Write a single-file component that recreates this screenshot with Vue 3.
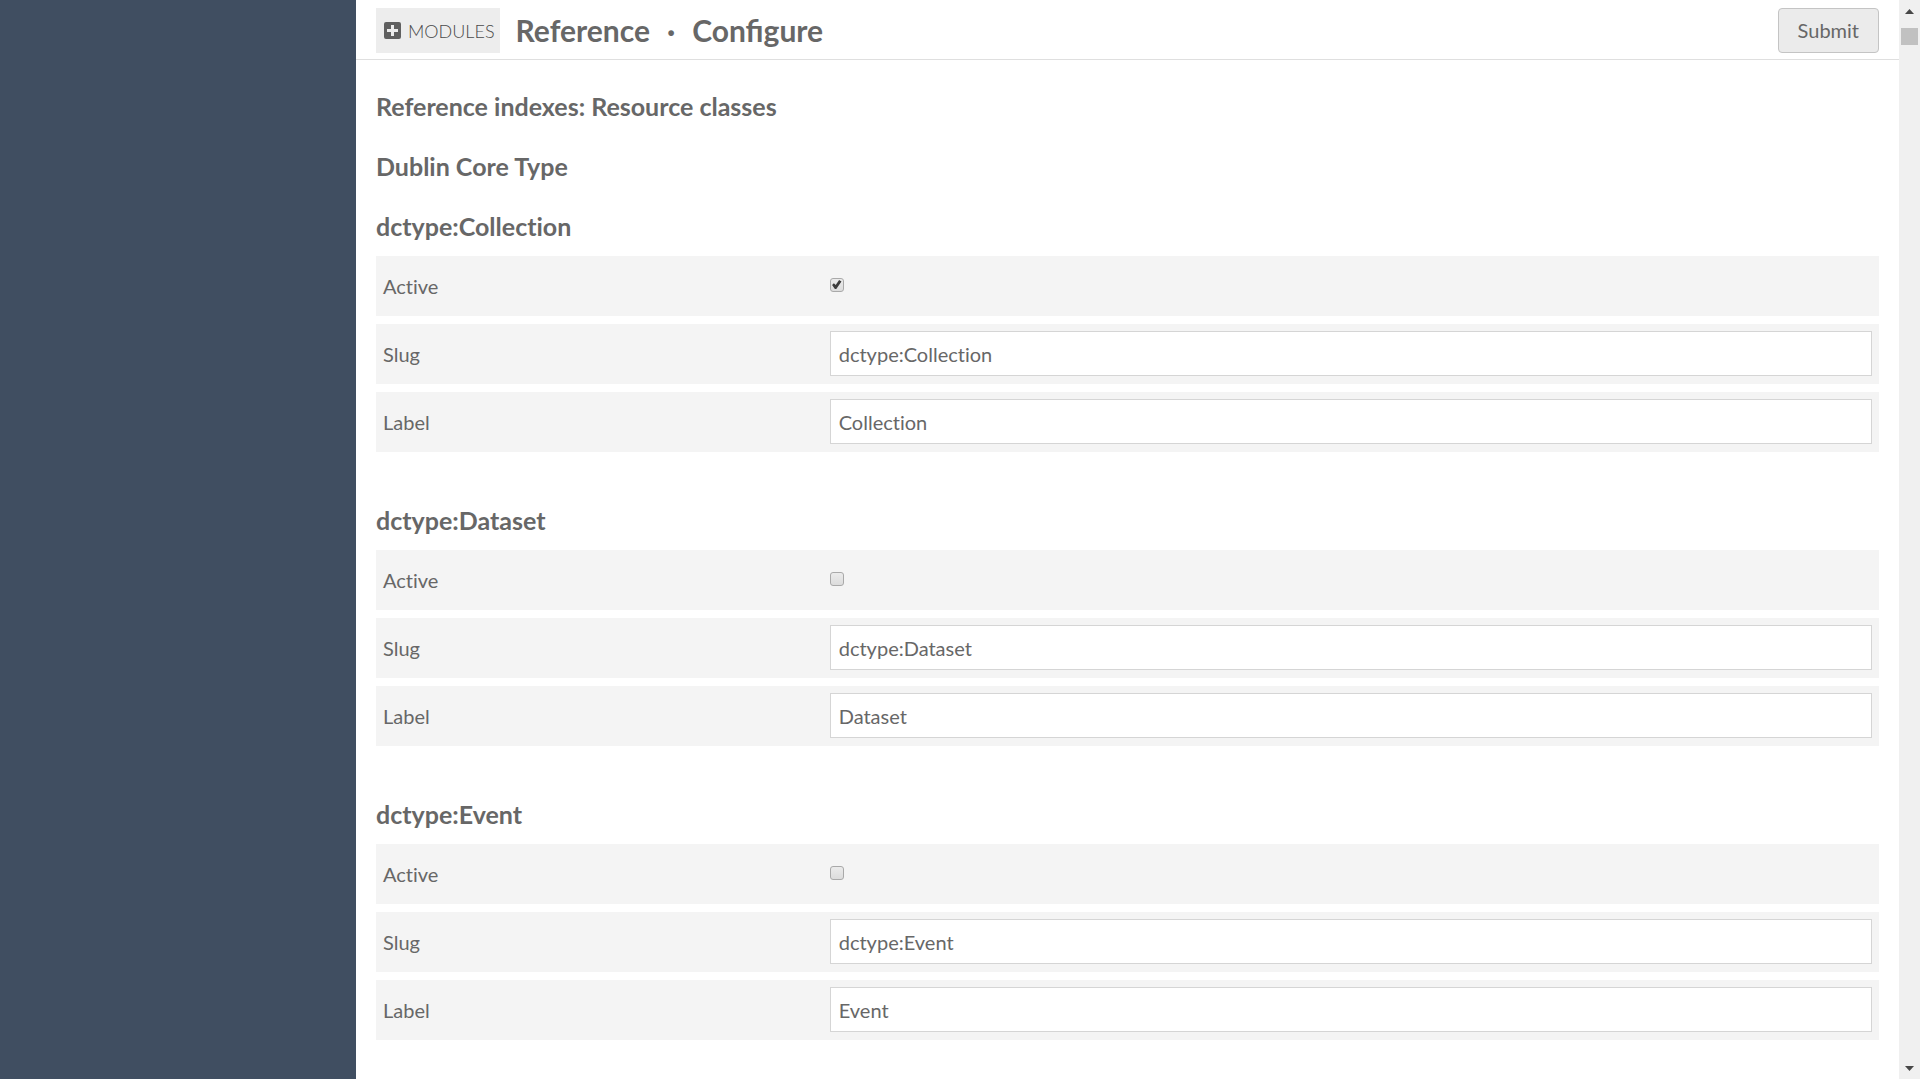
<script setup>
import { reactive } from 'vue'

const resourceClasses = reactive([
  { term: 'dctype:Collection', active: true, slug: 'dctype:Collection', label: 'Collection' },
  { term: 'dctype:Dataset', active: false, slug: 'dctype:Dataset', label: 'Dataset' },
  { term: 'dctype:Event', active: false, slug: 'dctype:Event', label: 'Event' },
])
</script>

<template>
  <div class="page">
    <aside class="sidebar"></aside>
    <form class="content" @submit.prevent>
      <header class="page-header">
        <a href="#" class="modules">
          <svg viewBox="0 0 17 17" aria-hidden="true">
            <path
              fill-rule="evenodd"
              d="M2 0h13a2 2 0 0 1 2 2v13a2 2 0 0 1-2 2H2a2 2 0 0 1-2-2V2a2 2 0 0 1 2-2zM7 3v4H3v3h4v4h3v-4h4V7h-4V3z"
            />
          </svg>
          <span>MODULES</span>
        </a>
        <h1><span>Reference</span><span class="dot">·</span><span>Configure</span></h1>
        <button type="submit">Submit</button>
      </header>

      <main>
        <h2>Reference indexes: Resource classes</h2>
        <h2>Dublin Core Type</h2>
        <section v-for="item in resourceClasses" :key="item.term">
          <h3>{{ item.term }}</h3>
          <div class="field">
            <label :for="item.term + '-active'">Active</label>
            <div class="inputs">
              <input :id="item.term + '-active'" v-model="item.active" type="checkbox" />
            </div>
          </div>
          <div class="field">
            <label :for="item.term + '-slug'">Slug</label>
            <div class="inputs">
              <input :id="item.term + '-slug'" v-model="item.slug" type="text" spellcheck="false" />
            </div>
          </div>
          <div class="field">
            <label :for="item.term + '-label'">Label</label>
            <div class="inputs">
              <input :id="item.term + '-label'" v-model="item.label" type="text" spellcheck="false" />
            </div>
          </div>
        </section>
      </main>
    </form>

    <div class="scrollbar" aria-hidden="true">
      <svg viewBox="0 0 9 5"><path d="M0 5L4.500 0L9 5z" /></svg>
      <div class="thumb"></div>
      <svg class="down" viewBox="0 0 9 5"><path d="M0 0h9L4.500 5z" /></svg>
    </div>
  </div>
</template>

<style>
body {
  margin: 0;
}
</style>

<style scoped>
.page {
  display: flex;
  min-height: 100vh;
  background: #fff;
  color: #676767;
  font-family: Lato, "Open Sans", sans-serif;
  font-size: 20px;
  font-variant-ligatures: none;
  line-height: 30px;
}

.page *,
.page {
  box-sizing: border-box;
}

.sidebar {
  flex: 0 0 356px;
  background: #404e61;
}

.content {
  flex: 1;
  min-width: 0;
}

.page-header {
  display: flex;
  align-items: center;
  padding: 8px 20px 6px;
  border-bottom: 1px solid #dfdfdf;
}

.modules {
  display: flex;
  align-items: center;
  gap: 7px;
  height: 45px;
  padding: 0 5px 0 8px;
  background: #ededed;
  color: #4a4a4a;
  font-size: 18px;
  font-weight: 300;
  line-height: 28px;
  text-decoration: none;
}

.modules svg {
  width: 17px;
  height: 17px;
  fill: #606060;
}

h1 {
  margin: 0 auto 0 16px;
  font-size: 30px;
  font-variant-ligatures: normal;
  line-height: 45px;
}

.dot {
  margin: 0 17px;
}

button {
  height: 45px;
  padding: 0 19px 2px;
  border: 1px solid #c4c4c4;
  border-radius: 4px;
  background: #ebebeb;
  color: inherit;
  font: inherit;
}

main {
  padding: 31px 20px 39px;
}

h2,
h3 {
  margin: 0;
  font-size: 25px;
  line-height: 30px;
}

h2 {
  margin-bottom: 30px;
}

h3 {
  margin-bottom: 15px;
}

section + section {
  margin-top: 53px;
}

.field {
  display: flex;
  align-items: center;
  min-height: 60px;
  padding: 7px 7px 8px;
  background: #f4f4f4;
}

.field + .field {
  margin-top: 8px;
}

label {
  width: 30%;
}

.inputs {
  display: flex;
  width: 70%;
}

input[type="text"] {
  width: 100%;
  height: 45px;
  padding: 1px 8px 0;
  border: 1px solid #d5d5d5;
  border-radius: 0;
  background: #fff;
  color: inherit;
  font: inherit;
  font-variant-ligatures: none;
}

input[type="checkbox"] {
  display: grid;
  place-items: center;
  width: 14px;
  height: 14px;
  margin: 0 0 2px;
  appearance: none;
  border: 1px solid #a9a9a9;
  border-radius: 3px;
  background: linear-gradient(#ebebeb, #dcdcdc);
}

input[type="checkbox"]:checked::before {
  content: "";
  width: 10px;
  height: 10px;
  background: #3c3c3c;
  clip-path: polygon(4% 54%, 22% 38%, 40% 54%, 74% 4%, 98% 20%, 46% 94%, 32% 94%);
}

.scrollbar {
  display: flex;
  flex: 0 0 21px;
  flex-direction: column;
  align-items: center;
  padding: 9px 0 8px;
  background: #f0f0f0;
}

.scrollbar svg {
  width: 9px;
  height: 5px;
  fill: #484848;
}

.thumb {
  width: 17px;
  height: 17px;
  margin-top: 14px;
  background: #c1c1c1;
}

.scrollbar .down {
  margin-top: auto;
}
</style>
